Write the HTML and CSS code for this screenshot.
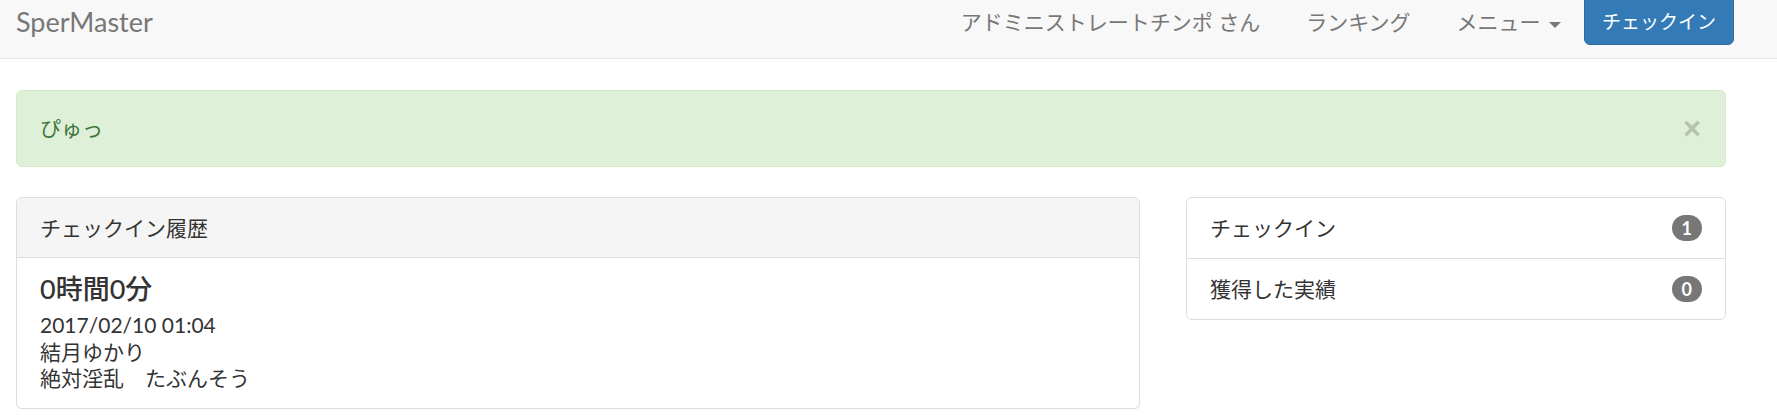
FILE: index.html
```html
<!DOCTYPE html>
<html lang="ja">
<head>
<meta charset="utf-8">
<title>SperMaster</title>
<link rel="stylesheet" href="styles.css">
</head>
<body>
<nav class="navbar">
  <a class="brand" href="#">SperMaster</a>
  <ul class="nav">
    <li><a href="#">アドミニストレートチンポ さん</a></li>
    <li><a href="#">ランキング</a></li>
    <li><a href="#">メニュー <span class="caret"></span></a></li>
  </ul>
  <a class="btn-checkin" href="#">チェックイン</a>
</nav>
<main class="container">
  <div class="alert">
    <span>ぴゅっ</span>
    <button class="close" type="button">×</button>
  </div>
  <div class="row">
    <section class="panel">
      <div class="panel-heading">チェックイン履歴</div>
      <div class="panel-body">
        <h4 class="duration">0時間0分</h4>
        <p class="entry">2017/02/10 01:04<br>結月ゆかり<br>絶対淫乱　たぶんそう</p>
      </div>
    </section>
    <ul class="list-group">
      <li class="list-item"><span>チェックイン</span><span class="badge">1</span></li>
      <li class="list-item"><span>獲得した実績</span><span class="badge">0</span></li>
    </ul>
  </div>
</main>
</body>
</html>
```

FILE: styles.css
```css
* { box-sizing: border-box; }

body {
  margin: 0;
  background: #fff;
  color: #333;
  font-family: Lato, "Noto Sans CJK JP", sans-serif;
  font-size: 21px;
  line-height: 26.5px;
}

a { text-decoration: none; }

.navbar {
  display: flex;
  align-items: flex-start;
  height: 59px;
  padding: 0 43px 0 16px;
  background: #f8f8f8;
  border-bottom: 1px solid #e7e7e7;
}

.brand {
  margin-right: auto;
  font-size: 27px;
  line-height: 43px;
  color: #777;
}

.nav {
  display: flex;
  list-style: none;
  margin: 0;
  padding: 0;
}

.nav a {
  display: block;
  padding: 0 23px;
  line-height: 43px;
  color: #777;
}

.caret {
  display: inline-block;
  width: 0;
  height: 0;
  margin-left: 3px;
  vertical-align: middle;
  border-top: 6px solid #777;
  border-left: 6px solid transparent;
  border-right: 6px solid transparent;
}

.btn-checkin {
  display: flex;
  align-items: center;
  justify-content: center;
  margin-top: -6px;
  height: 51px;
  width: 150px;
  padding-top: 5px;
  background: #337ab7;
  border: 1px solid #2e6da4;
  border-radius: 6px;
  color: #fff;
  font-size: 19px;
}

.container {
  padding: 31px 51px 0 16px;
}

.alert {
  display: flex;
  justify-content: space-between;
  align-items: center;
  padding: 22px 24px 22px 23px;
  background: #dff0d8;
  border: 1px solid #d6e9c6;
  border-radius: 6px;
  color: #3c763d;
}

.close {
  padding: 0;
  border: 0;
  background: none;
  font-family: "Liberation Sans", Arial, sans-serif;
  font-size: 31px;
  font-weight: bold;
  line-height: 1;
  color: #000;
  opacity: 0.18;
}

.row {
  display: grid;
  grid-template-columns: 1124px 540px;
  justify-content: space-between;
  align-items: start;
  margin-top: 30px;
}

.panel {
  background: #fff;
  border: 1px solid #ddd;
  border-radius: 6px;
  box-shadow: 0 1px 1px rgba(0, 0, 0, 0.05);
  overflow: hidden;
}

.panel-heading {
  padding: 16px 23px;
  line-height: 27px;
  background: #f5f5f5;
  border-bottom: 1px solid #ddd;
}

.panel-body {
  padding: 16px 23px 16px;
}

.duration {
  margin: 0 0 8px;
  font-size: 27px;
  font-weight: 500;
  line-height: 30px;
}

.entry {
  margin: 0;
}

.list-group {
  list-style: none;
  margin: 0;
  padding: 0;
  background: #fff;
  border: 1px solid #ddd;
  border-radius: 6px;
}

.list-item {
  display: flex;
  justify-content: space-between;
  align-items: center;
  padding: 16px 23px 17px;
  line-height: 27px;
}

.list-item + .list-item {
  border-top: 1px solid #ddd;
}

.badge {
  display: inline-block;
  min-width: 30px;
  padding: 4px 10px;
  border-radius: 15px;
  background: #777;
  color: #fff;
  font-size: 18px;
  font-weight: bold;
  line-height: 1;
  text-align: center;
}
```
